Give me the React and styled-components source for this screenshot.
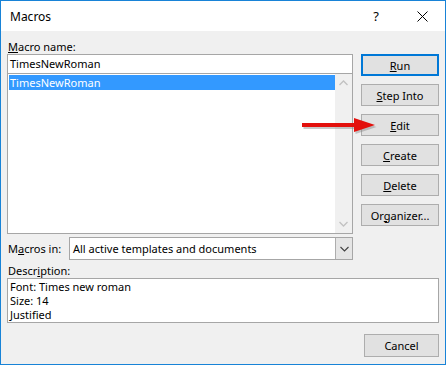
import React from 'react'
import styled, { createGlobalStyle } from 'styled-components'

const GlobalStyle = createGlobalStyle`
  html, body {
    margin: 0;
    padding: 0;
    background: #ffffff;
  }
  body {
    font-family: "Noto Sans", "Open Sans", sans-serif;
    font-size: 11px;
    color: #000000;
  }
`

const buttons = [
  { key: 'R', rest: 'un', isDefault: true },
  { key: 'S', rest: 'tep Into' },
  { key: 'E', rest: 'dit' },
  { key: 'C', rest: 'reate' },
  { key: 'D', rest: 'elete' },
  { pre: 'Or', key: 'g', rest: 'anizer...' },
]

const App = () =>
  <>
    <GlobalStyle />
    <Dialog>
      <TitleBar>
        <Title>Macros</Title>
        <TitleButton>?</TitleButton>
        <TitleButton>
          <svg width="11" height="11" viewBox="0 0 11 11">
            <path d="M0.5 0.5 L10.5 10.5 M10.5 0.5 L0.5 10.5" stroke="#000" strokeWidth="1" />
          </svg>
        </TitleButton>
      </TitleBar>
      <Body>
        <TopSection>
          <LeftCol>
            <Label><u>M</u>acro name:</Label>
            <TextInput>TimesNewRoman</TextInput>
            <ListBox>
              <Items>
                <Item selected>TimesNewRoman</Item>
              </Items>
              <ScrollBar>
                <svg width="9" height="6" viewBox="0 0 9 6">
                  <path d="M0.5 5 L4.5 1 L8.5 5" stroke="#c2c2c2" strokeWidth="1.3" fill="none" />
                </svg>
                <svg width="9" height="6" viewBox="0 0 9 6">
                  <path d="M0.5 1 L4.5 5 L8.5 1" stroke="#c2c2c2" strokeWidth="1.3" fill="none" />
                </svg>
              </ScrollBar>
            </ListBox>
          </LeftCol>
          <ButtonCol>
            {buttons.map(b =>
              <Button key={b.rest} isDefault={b.isDefault}>
                {b.pre}<u>{b.key}</u>{b.rest}
              </Button>
            )}
          </ButtonCol>
        </TopSection>
        <MacrosInRow>
          <InlineLabel>M<u>a</u>cros in:</InlineLabel>
          <Select>
            <SelectText>All active templates and documents</SelectText>
            <DropButton>
              <svg width="9" height="6" viewBox="0 0 9 6">
                <path d="M0.5 1 L4.5 5 L8.5 1" stroke="#404040" strokeWidth="1.1" fill="none" />
              </svg>
            </DropButton>
          </Select>
        </MacrosInRow>
        <DescLabel>Descr<u>i</u>ption:</DescLabel>
        <DescBox>
          <DescLine>Font: Times new roman</DescLine>
          <DescLine>Size: 14</DescLine>
          <DescLine>Justified</DescLine>
        </DescBox>
        <Footer>
          <CancelButton>Cancel</CancelButton>
        </Footer>
      </Body>
      <Arrow width="80" height="20" viewBox="0 0 80 20">
        <g transform="translate(1.5,2)" fill="#8a8a8a" opacity="0.45">
          <rect x="3" y="8" width="56" height="4" />
          <polygon points="55,3 76,10 55,17" />
        </g>
        <g fill="#e3100c">
          <rect x="3" y="8" width="56" height="4" />
          <polygon points="55,3 76,10 55,17" />
        </g>
      </Arrow>
    </Dialog>
  </>

export default App

/* STYLES */
const Dialog = styled.div`
  position: relative;
  width: 446px;
  height: 365px;
  box-sizing: border-box;
  border: 1px solid #1883d7;
  background: #f0f0f0;
  display: flex;
  flex-direction: column;
`

const TitleBar = styled.div`
  height: 30px;
  background: #ffffff;
  display: flex;
  align-items: center;
  padding-left: 9px;
`

const Title = styled.div`
  flex: 1;
  font-size: 12px;
`

const TitleButton = styled.div`
  width: 46px;
  height: 30px;
  display: flex;
  align-items: center;
  justify-content: center;
  font-size: 13px;
`

const Body = styled.div`
  flex: 1;
  display: flex;
  flex-direction: column;
  padding: 8px 6px 7px 6px;
`

const TopSection = styled.div`
  display: flex;
  gap: 8px;
`

const LeftCol = styled.div`
  width: 346px;
  display: flex;
  flex-direction: column;
`

const Label = styled.div`
  height: 15px;
  line-height: 15px;
  padding-left: 1px;
`

const TextInput = styled.div`
  height: 20px;
  box-sizing: border-box;
  border: 1px solid #a6a6a6;
  background: #ffffff;
  padding-left: 2px;
  line-height: 18px;
`

const ListBox = styled.div`
  height: 160px;
  box-sizing: border-box;
  border: 1px solid #a6a6a6;
  border-top: none;
  background: #ffffff;
  display: flex;
`

const Items = styled.div`
  flex: 1;
  padding: 1px 0 0 1px;
`

const Item = styled.div`
  height: 15px;
  line-height: 15px;
  padding-left: 1px;
  background: ${p => p.selected ? '#3399ff' : 'transparent'};
  color: ${p => p.selected ? '#ffffff' : '#000000'};
`

const ScrollBar = styled.div`
  width: 17px;
  background: #f0f0f0;
  display: flex;
  flex-direction: column;
  justify-content: space-between;
  align-items: center;
  padding: 6px 0 6px;
`

const ButtonCol = styled.div`
  display: flex;
  flex-direction: column;
  gap: 8px;
  padding-top: 15px;
`

const Button = styled.div`
  width: 78px;
  height: 22px;
  box-sizing: border-box;
  border: ${p => p.isDefault ? '2px solid #0078d7' : '1px solid #adadad'};
  background: #e1e1e1;
  display: flex;
  align-items: center;
  justify-content: center;
  white-space: nowrap;
`

const MacrosInRow = styled.div`
  margin-top: 3px;
  height: 23px;
  display: flex;
  align-items: center;
`

const InlineLabel = styled.div`
  width: 62px;
  padding-left: 1px;
  box-sizing: border-box;
`

const Select = styled.div`
  width: 284px;
  height: 23px;
  box-sizing: border-box;
  border: 1px solid #a6a6a6;
  background: #ffffff;
  display: flex;
`

const SelectText = styled.div`
  flex: 1;
  padding-left: 3px;
  line-height: 21px;
`

const DropButton = styled.div`
  width: 17px;
  box-sizing: border-box;
  background: #e5e5e5;
  border-left: 1px solid #adadad;
  display: flex;
  align-items: center;
  justify-content: center;
`

const DescLabel = styled.div`
  margin-top: 3px;
  height: 15px;
  line-height: 15px;
  padding-left: 1px;
`

const DescBox = styled.div`
  height: 45px;
  box-sizing: border-box;
  border: 1px solid #a6a6a6;
  background: #ffffff;
  padding: 1px 2px;
`

const DescLine = styled.div`
  height: 14px;
  line-height: 14px;
`

const Footer = styled.div`
  margin-top: auto;
  display: flex;
  justify-content: flex-end;
`

const CancelButton = styled(Button)`
  width: 75px;
  height: 23px;
`

const Arrow = styled.svg`
  position: absolute;
  left: 298px;
  top: 114px;
`
